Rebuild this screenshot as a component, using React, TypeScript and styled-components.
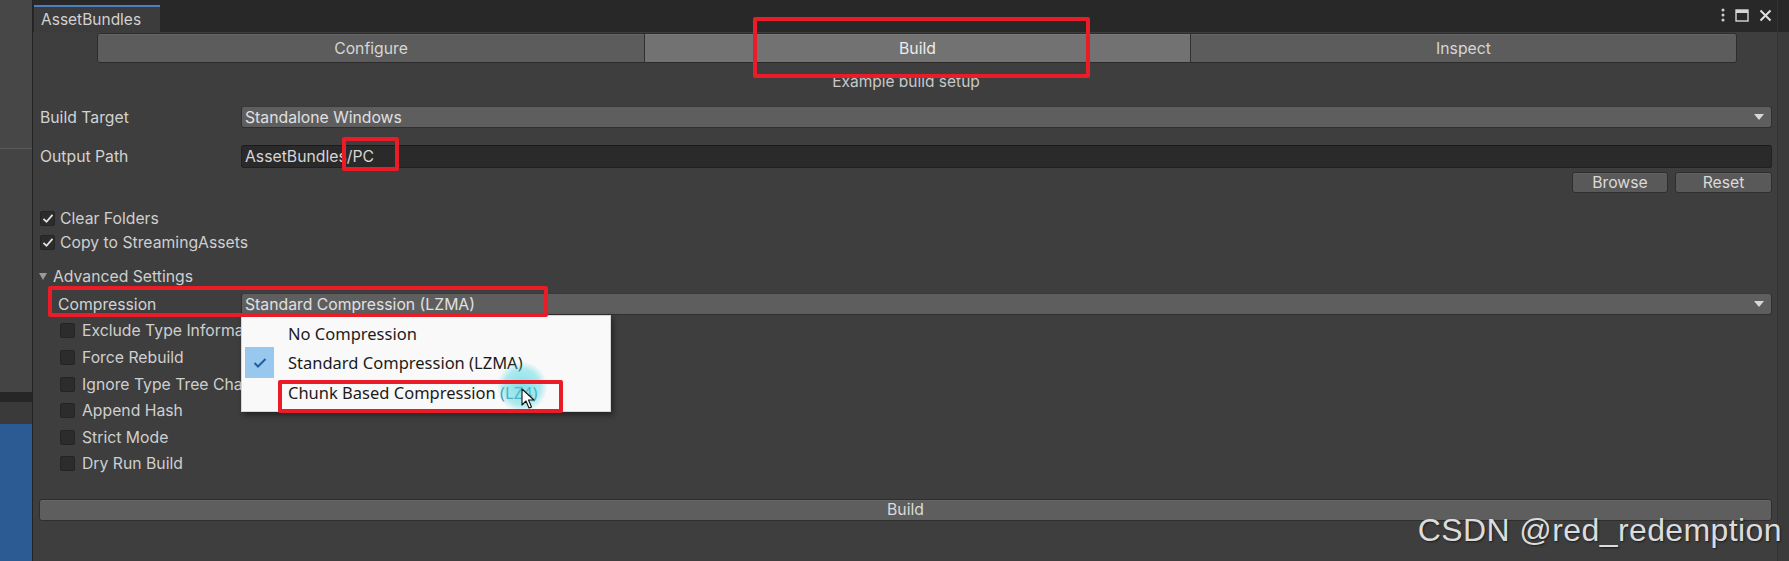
import React from 'react';
import styled, { createGlobalStyle } from 'styled-components';

const Global = createGlobalStyle`
  html, body { margin: 0; padding: 0; background: #3e3e3e; overflow: hidden; }
  body { font-family: Inter, "Noto Sans", sans-serif; -webkit-font-smoothing: antialiased; }
  * { box-sizing: border-box; }
`;

const Screen = styled.div`
  position: relative;
  width: 1789px;
  height: 561px;
  display: flex;
  overflow: hidden;
  background: #3e3e3e;
`;

const SideStrip = styled.div`
  width: 32px;
  flex: none;
  display: flex;
  flex-direction: column;
`;

const StripPart = styled.div<{ $h?: number; $bg: string }>`
  flex: ${p => (p.$h ? `0 0 ${p.$h}px` : '1 1 auto')};
  background: ${p => p.$bg};
`;

const RightStrip = styled.div`
  width: 12px;
  flex: none;
  background: #3b3b3b;
  border-left: 1px solid #333333;
  display: flex;
  flex-direction: column;
`;

const RightStripTop = styled.div`
  height: 32px;
  background: #282828;
`;

const Panel = styled.div`
  flex: 1;
  display: flex;
  flex-direction: column;
  border-left: 1px solid #232323;
  min-width: 0;
`;

const TabBar = styled.div`
  height: 32px;
  flex: none;
  background: #282828;
  display: flex;
  align-items: flex-end;
  padding-left: 1px;
`;

const Tab = styled.div`
  width: 126px;
  height: 27px;
  background: #3c3c3c;
  border-top: 2px solid #4c7fbf;
  color: #d2d2d2;
  font-size: 15.5px;
  padding-left: 7px;
  display: flex;
  align-items: center;
`;

const WindowControls = styled.div`
  margin-left: auto;
  align-self: flex-start;
  margin-top: 7px;
  margin-right: 5px;
  display: flex;
  align-items: center;
  gap: 10px;
  height: 16px;
`;

const Content = styled.div`
  flex: 1;
  display: flex;
  flex-direction: column;
  padding: 1px 5px 0 7px;
  background: #3e3e3e;
  color: #d2d2d2;
  font-size: 15.75px;
`;

const Toolbar = styled.div`
  height: 30px;
  margin: 0 35px 0 57px;
  display: grid;
  grid-template-columns: 1fr 1fr 1fr;
  border: 1px solid #2c2c2c;
  border-radius: 3px;
  overflow: hidden;
`;

const ToolbarButton = styled.div<{ $active?: boolean }>`
  display: flex;
  align-items: center;
  justify-content: center;
  background: ${p => (p.$active ? '#727272' : '#5c5c5c')};
  color: ${p => (p.$active ? '#ececec' : '#d6d6d6')};
  border-left: 1px solid #303030;
  box-shadow: inset 0 1px 0 rgba(255, 255, 255, 0.06);
  &:first-child { border-left: none; }
`;

const Subtitle = styled.div`
  height: 20px;
  margin-top: 9px;
  text-align: center;
  line-height: 20px;
  font-size: 15.5px;
  color: #c8c8c8;
`;

const FieldRow = styled.div<{ $top: number; $h?: number }>`
  display: flex;
  align-items: center;
  height: ${p => p.$h ?? 22}px;
  margin-top: ${p => p.$top}px;
`;

const Label = styled.div<{ $indent?: number }>`
  width: 201px;
  flex: none;
  padding-left: ${p => p.$indent ?? 0}px;
  white-space: nowrap;
`;

const Dropdown = styled.div`
  position: relative;
  flex: 1;
  height: 100%;
  background: #5e5e5e;
  border: 1px solid #2f2f2f;
  border-top-color: #3a3a3a;
  border-radius: 3px;
  padding-left: 3px;
  display: flex;
  align-items: center;
  color: #e0e0e0;
`;

const Arrow = styled.span`
  margin-left: auto;
  margin-right: 7px;
  width: 0;
  height: 0;
  border-left: 5px solid transparent;
  border-right: 5px solid transparent;
  border-top: 6px solid #d8d8d8;
`;

const TextField = styled.div`
  flex: 1;
  height: 100%;
  background: #2a2a2a;
  border: 1px solid #212121;
  border-top-color: #1b1b1b;
  border-radius: 3px;
  padding-left: 3px;
  display: flex;
  align-items: center;
  color: #d6d6d6;
`;

const ButtonRow = styled.div`
  display: flex;
  justify-content: flex-end;
  gap: 7px;
  height: 21px;
  margin-top: 4px;
`;

const SmallButton = styled.div<{ $w: number }>`
  width: ${p => p.$w}px;
  height: 100%;
  background: #595959;
  border: 1px solid #2e2e2e;
  border-radius: 3px;
  display: flex;
  align-items: center;
  justify-content: center;
  color: #dadada;
  box-shadow: inset 0 1px 0 rgba(255, 255, 255, 0.06);
`;

const ToggleRow = styled.div<{ $top?: number; $indent?: number; $h?: number }>`
  display: flex;
  align-items: center;
  height: ${p => p.$h ?? 22}px;
  margin-top: ${p => p.$top ?? 0}px;
  padding-left: ${p => p.$indent ?? 0}px;
  gap: ${p => (p.$indent ? 7 : 5)}px;
  white-space: nowrap;
  color: #cfcfcf;
`;

const Box = styled.div`
  width: 15px;
  height: 15px;
  flex: none;
  background: #2c2c2c;
  border: 1px solid #242424;
  border-radius: 2px;
  display: flex;
  align-items: center;
  justify-content: center;
`;

const Foldout = styled.div`
  display: flex;
  align-items: center;
  gap: 6px;
  height: 22px;
  margin-top: 12px;
  color: #cfcfcf;
`;

const FoldTriangle = styled.span`
  width: 0;
  height: 0;
  margin-left: -1px;
  border-left: 4px solid transparent;
  border-right: 4px solid transparent;
  border-top: 7px solid #9a9a9a;
`;

const BuildButton = styled.div`
  height: 22px;
  margin-top: 21.7px;
  margin-left: -1px;
  background: #5e5e5e;
  border: 1px solid #2e2e2e;
  border-radius: 3px;
  display: flex;
  align-items: center;
  justify-content: center;
  color: #dadada;
  box-shadow: inset 0 1px 0 rgba(255, 255, 255, 0.05);
`;

const Menu = styled.div`
  position: absolute;
  top: calc(100% + 1px);
  left: -1px;
  width: 370px;
  padding: 2.5px 0 4px 3px;
  background: #f9f9f9;
  border: 1px solid #d6d6d6;
  box-shadow: 2px 3px 6px rgba(0, 0, 0, 0.45);
  z-index: 5;
  font-family: "Noto Sans", "Noto Sans CJK SC", sans-serif;
  font-size: 16.5px;
  color: #1b1b1b;
`;

const MenuItem = styled.div`
  height: 29.5px;
  display: flex;
  align-items: center;
  gap: 14px;
  white-space: nowrap;
`;

const CheckSlot = styled.div<{ $on?: boolean }>`
  width: 29px;
  height: 31px;
  flex: none;
  background: ${p => (p.$on ? '#99c8ef' : 'transparent')};
  display: flex;
  align-items: center;
  justify-content: center;
`;

const Tinted = styled.span`
  color: #4590b8;
`;

const Glow = styled.div`
  position: absolute;
  left: 497px;
  top: 362px;
  width: 50px;
  height: 50px;
  border-radius: 50%;
  background: radial-gradient(circle, rgba(80, 215, 225, 0.7) 0%, rgba(80, 215, 225, 0.45) 50%, rgba(80, 215, 225, 0) 72%);
  z-index: 6;
  pointer-events: none;
`;

const Cursor = styled.svg`
  position: absolute;
  left: 521px;
  top: 388px;
  z-index: 8;
`;

const RedBox = styled.div<{ $x: number; $y: number; $w: number; $h: number }>`
  position: absolute;
  left: ${p => p.$x}px;
  top: ${p => p.$y}px;
  width: ${p => p.$w}px;
  height: ${p => p.$h}px;
  border: 4px solid #ea1c27;
  border-radius: 2px;
  z-index: 9;
  pointer-events: none;
`;

const Watermark = styled.div`
  position: absolute;
  right: 7px;
  top: 510px;
  font-family: "Liberation Sans", Arial, sans-serif;
  font-size: 32px;
  line-height: 40px;
  letter-spacing: 0.4px;
  color: #dcdcdc;
  text-shadow: 1px 1px 2px rgba(0, 0, 0, 0.55);
  z-index: 10;
  white-space: nowrap;
`;

const Check = () => (
  <svg width="12" height="11" viewBox="0 0 12 11">
    <path d="M1.5 5.8 L4.5 8.8 L10.5 1.8" fill="none" stroke="#e4e4e4" strokeWidth="1.8" />
  </svg>
);

const Toggle: React.FC<{ checked?: boolean; indent?: number; top?: number; h?: number; children: React.ReactNode }> = ({ checked, indent, top, h, children }) => (
  <ToggleRow $indent={indent} $top={top} $h={h}>
    <Box>{checked && <Check />}</Box>
    {children}
  </ToggleRow>
);

export default function App() {
  return (
    <>
      <Global />
      <Screen>
        <SideStrip>
          <StripPart $h={148} $bg="#474747" />
          <StripPart $h={1} $bg="#5b5b5b" />
          <StripPart $h={243} $bg="#444444" />
          <StripPart $h={10} $bg="#262626" />
          <StripPart $h={22} $bg="#3a3a3a" />
          <StripPart $bg="#2c5a92" />
        </SideStrip>
        <Panel>
          <TabBar>
            <Tab>AssetBundles</Tab>
            <WindowControls>
              <svg width="4" height="14" viewBox="0 0 4 14">
                <circle cx="2" cy="2" r="1.5" fill="#d0d0d0" />
                <circle cx="2" cy="7" r="1.5" fill="#d0d0d0" />
                <circle cx="2" cy="12" r="1.5" fill="#d0d0d0" />
              </svg>
              <svg width="14" height="13" viewBox="0 0 14 13">
                <rect x="1" y="1" width="12" height="11" fill="none" stroke="#d6d6d6" strokeWidth="1.4" />
                <rect x="1" y="1" width="12" height="3" fill="#d6d6d6" />
              </svg>
              <svg width="13" height="13" viewBox="0 0 13 13">
                <path d="M1.5 1.5 L11.5 11.5 M11.5 1.5 L1.5 11.5" stroke="#e0e0e0" strokeWidth="2" />
              </svg>
            </WindowControls>
          </TabBar>
          <Content>
            <Toolbar>
              <ToolbarButton>Configure</ToolbarButton>
              <ToolbarButton $active>Build</ToolbarButton>
              <ToolbarButton>Inspect</ToolbarButton>
            </Toolbar>
            <Subtitle>Example build setup</Subtitle>
            <FieldRow $top={14}>
              <Label>Build Target</Label>
              <Dropdown>
                Standalone Windows
                <Arrow />
              </Dropdown>
            </FieldRow>
            <FieldRow $top={17} $h={23}>
              <Label>Output Path</Label>
              <TextField>AssetBundles/PC</TextField>
            </FieldRow>
            <ButtonRow>
              <SmallButton $w={96}>Browse</SmallButton>
              <SmallButton $w={97}>Reset</SmallButton>
            </ButtonRow>
            <Toggle checked top={14}>Clear Folders</Toggle>
            <Toggle checked top={2}>Copy to StreamingAssets</Toggle>
            <Foldout>
              <FoldTriangle />
              Advanced Settings
            </Foldout>
            <FieldRow $top={6}>
              <Label $indent={18}>Compression</Label>
              <Dropdown>
                Standard Compression (LZMA)
                <Arrow />
                <Menu>
                  <MenuItem>
                    <CheckSlot />
                    No Compression
                  </MenuItem>
                  <MenuItem>
                    <CheckSlot $on>
                      <svg width="14" height="12" viewBox="0 0 14 12">
                        <path d="M1.5 6 L5 9.5 L12.5 2" fill="none" stroke="#1f5f9e" strokeWidth="2" />
                      </svg>
                    </CheckSlot>
                    Standard Compression (LZMA)
                  </MenuItem>
                  <MenuItem>
                    <CheckSlot />
                    <span>
                      Chunk Based Compression <Tinted>(LZ4)</Tinted>
                    </span>
                  </MenuItem>
                </Menu>
              </Dropdown>
            </FieldRow>
            <Toggle indent={20} top={2.7} h={26.6}>Exclude Type Information</Toggle>
            <Toggle indent={20} h={26.6}>Force Rebuild</Toggle>
            <Toggle indent={20} h={26.6}>Ignore Type Tree Changes</Toggle>
            <Toggle indent={20} h={26.6}>Append Hash</Toggle>
            <Toggle indent={20} h={26.6}>Strict Mode</Toggle>
            <Toggle indent={20} h={26.6}>Dry Run Build</Toggle>
            <BuildButton>Build</BuildButton>
          </Content>
        </Panel>
        <RightStrip>
          <RightStripTop />
        </RightStrip>

        <Glow />
        <Cursor width="14" height="21" viewBox="0 0 14 21">
          <path d="M1 1 L1 17 L5 13 L8 20 L10.5 19 L7.5 12 L13 12 Z" fill="#ffffff" stroke="#111111" strokeWidth="1.1" strokeLinejoin="round" />
        </Cursor>

        <RedBox $x={753} $y={17} $w={337} $h={61} />
        <RedBox $x={342} $y={137} $w={57} $h={34} />
        <RedBox $x={48} $y={286} $w={500} $h={31} />
        <RedBox $x={278} $y={380} $w={285} $h={33} />

        <Watermark>CSDN @red_redemption</Watermark>
      </Screen>
    </>
  );
}
